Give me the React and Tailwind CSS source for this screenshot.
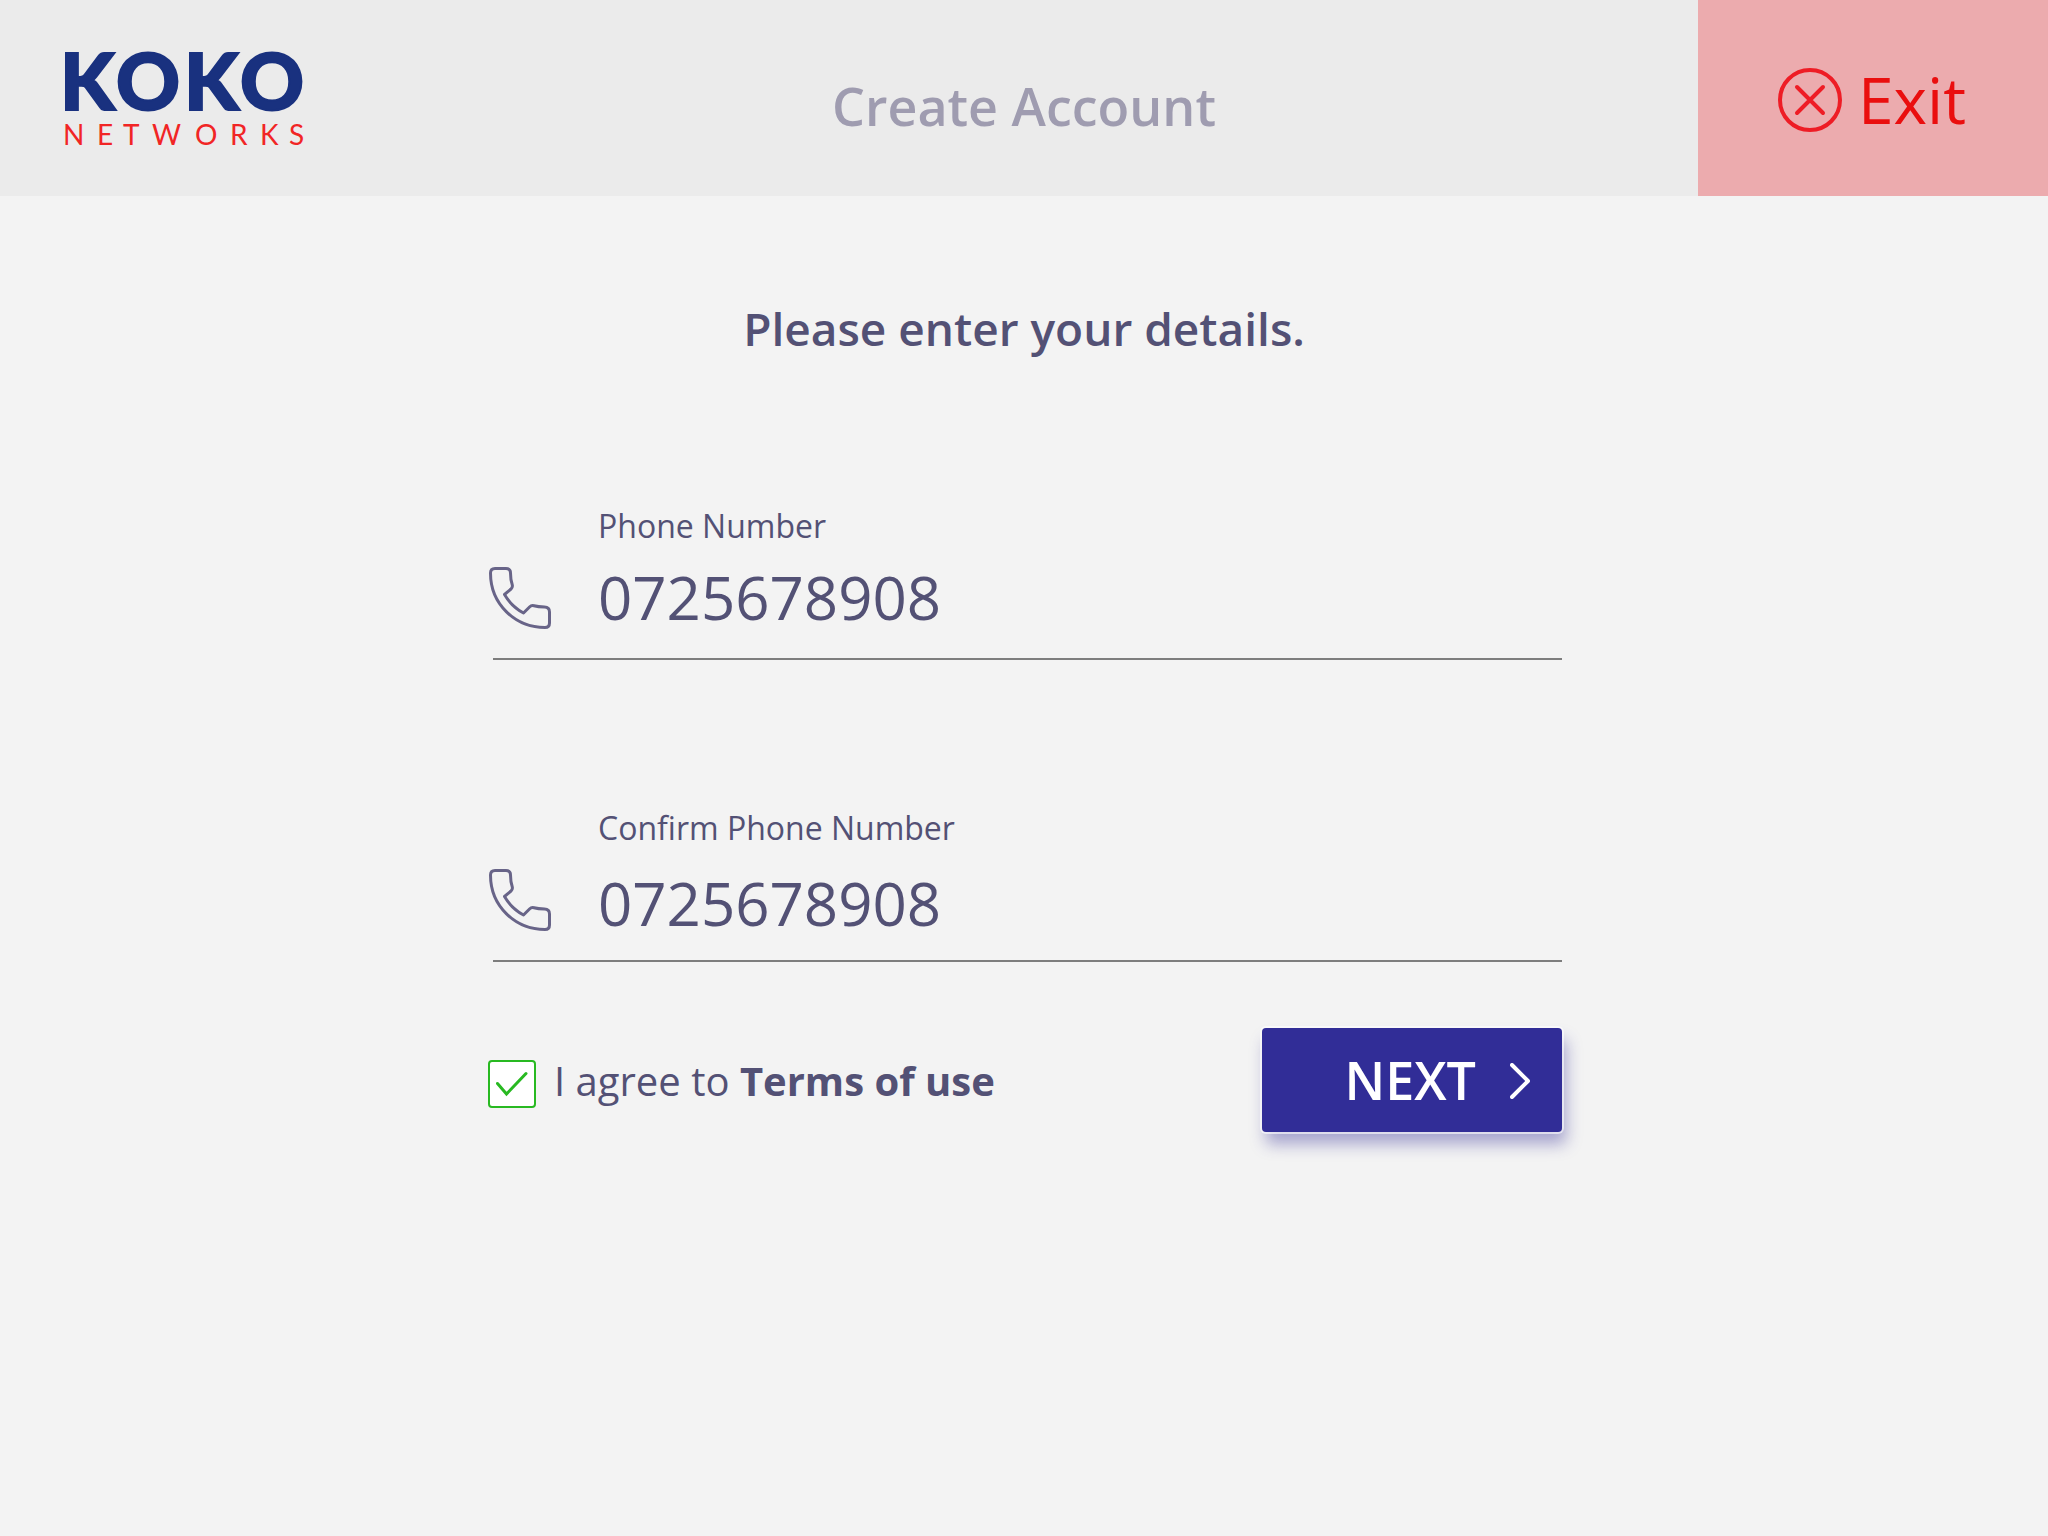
import React, { useState } from "react";

function Logo() {
  return (
    <svg viewBox="0 0 260 136" className="h-[136px] w-[260px]" role="img" aria-label="KOKO Networks">
      <text y="90" x="4 60 128 184" fontFamily="Lato, sans-serif" fontWeight="900" fontSize="79" fill="#19317f" stroke="#19317f" strokeWidth="2">KOKO</text>
      <text y="125" x="7 41 67 96 139 174 204 233" fontFamily="Lato, sans-serif" fontSize="28" fill="#f12525">NETWORKS</text>
    </svg>
  );
}

function PhoneIcon({ className }) {
  return (
    <svg viewBox="0 0 62 62" className={className} fill="none" stroke="#686488" strokeWidth="3" strokeLinejoin="round" aria-hidden="true">
      <path d="M6 1.5H17Q21.500 1.500 21.500 6Q21.500 13 23.300 18Q23.800 20.500 22 22L15.500 27.500Q22.500 39.500 34.500 46L40.500 40Q42.500 38 45 38.800Q49 40 55.500 40Q60.500 40 60.500 45V56Q60.500 60.500 56 60.500C26 60.500 1.500 37 1.500 6Q1.500 1.500 6 1.500Z" />
    </svg>
  );
}

function Field({ id, label, value, onChange, inputClass }) {
  return (
    <div>
      <div className="grid grid-cols-[110px_1fr]">
        <PhoneIcon className="row-span-2 mb-[29px] ml-px h-[62px] w-[62px] self-end" />
        <label htmlFor={id} className="text-[32px] leading-[44px]">{label}</label>
        <input
          id={id}
          type="tel"
          value={value}
          onChange={onChange}
          className={`w-full bg-transparent text-[60px] leading-[72px] outline-none ${inputClass}`}
        />
      </div>
      <div className="ml-[5px] h-[2px] bg-[#7d7d7d]" />
    </div>
  );
}

export default function App() {
  const [phone, setPhone] = useState("0725678908");
  const [confirm, setConfirm] = useState("0725678908");
  const [agreed, setAgreed] = useState(true);
  return (
    <div className="min-h-screen bg-[#f3f3f3] font-['Open_Sans',sans-serif] text-[#535175]">
      <header className="grid h-[196px] grid-cols-[350px_1fr_350px] bg-[#ebebeb]">
        <div className="pt-5 pl-14">
          <Logo />
        </div>
        <h1 className="self-center pt-4 text-center text-[52px] leading-[72px] font-semibold text-[#9f9cb0]">Create Account</h1>
        <button type="button" className="flex items-center justify-center gap-4 bg-[#ecabae] pt-1 pr-[2px] text-[64px] leading-[80px] text-[#ea0e0e]">
          <svg viewBox="0 0 64 64" className="h-16 w-16" fill="none" stroke="#ee1c25" strokeWidth="4" strokeLinecap="round" aria-hidden="true">
            <circle cx="32" cy="32" r="30" />
            <path d="M19 19L45 45M45 19L19 45" />
          </svg>
          Exit
        </button>
      </header>
      <main className="pt-[100px]">
        <h2 className="text-center text-[46px] leading-[64px] font-semibold">Please enter your details.</h2>
        <form className="mx-auto mt-36 max-w-[1076px] pl-[2px]" onSubmit={(e) => e.preventDefault()}>
          <Field id="phone" label="Phone Number" value={phone} onChange={(e) => setPhone(e.target.value)} inputClass="pt-[13px] pb-[25px]" />
          <div className="mt-[146px]">
            <Field id="confirm" label="Confirm Phone Number" value={confirm} onChange={(e) => setConfirm(e.target.value)} inputClass="pt-[17px] pb-[21px]" />
          </div>
          <div className="mt-[66px] flex h-[104px] items-center justify-between">
            <div className="flex items-center gap-[18px]">
              <span className="relative mt-2 h-12 w-12">
                <input
                  id="terms"
                  type="checkbox"
                  checked={agreed}
                  onChange={(e) => setAgreed(e.target.checked)}
                  className="block h-12 w-12 appearance-none rounded-[4px] border-2 border-[#28b921] bg-white"
                />
                {agreed && (
                  <svg viewBox="0 0 48 48" className="pointer-events-none absolute inset-0" fill="none" stroke="#28b921" strokeWidth="3" strokeLinecap="round" aria-hidden="true">
                    <path d="M9.500 23.500L18.500 34L38 13.500" />
                  </svg>
                )}
              </span>
              <label htmlFor="terms" className="pt-[2px] text-[40px] leading-[56px]">
                I agree to <a href="#terms" className="font-bold">Terms of use</a>
              </label>
            </div>
            <button type="submit" className="flex h-[104px] w-[300px] items-center justify-end gap-[34px] rounded-[4px] bg-[#312d97] pr-8 text-[52px] leading-[72px] font-semibold text-white shadow-[0_0_0_2px_rgba(255,255,255,0.6),4px_12px_16px_rgba(49,45,151,0.4)]">
              NEXT
              <svg viewBox="0 0 20 36" className="mt-[2px] h-9 w-5" fill="none" stroke="currentColor" strokeWidth="4" strokeLinecap="round" strokeLinejoin="round" aria-hidden="true">
                <path d="M2 2L18 18L2 34" />
              </svg>
            </button>
          </div>
        </form>
      </main>
    </div>
  );
}
